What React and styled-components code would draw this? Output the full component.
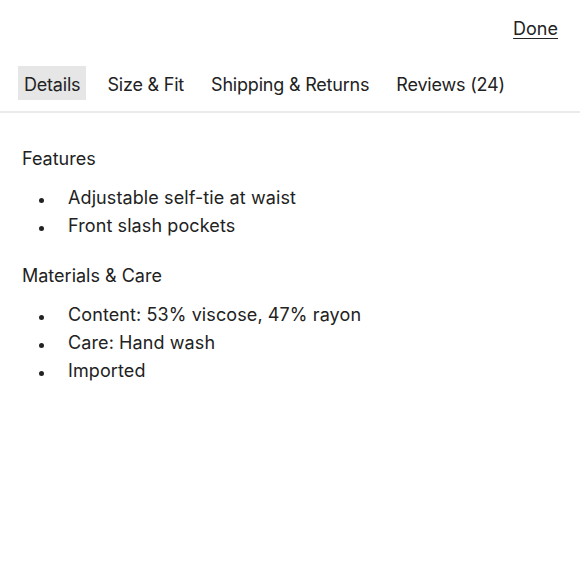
import React from "react";
import styled, { createGlobalStyle } from "styled-components";

const Global = createGlobalStyle`
  html, body { margin: 0; padding: 0; background: #fff; }
  body { font-family: Inter, "Noto Sans", sans-serif; color: #222; }
`;

const Page = styled.div`
  width: 580px;
  display: flex;
  flex-direction: column;
`;

const TopBar = styled.div`
  display: flex;
  justify-content: flex-end;
  padding: 17px 22px 0 0;
  height: 51px;
  box-sizing: border-box;
`;

const DoneLink = styled.a`
  font-size: 18px;
  color: #222;
  text-decoration: underline;
  text-decoration-thickness: 1px;
  text-underline-offset: 3px;
  line-height: 24px;
  cursor: pointer;
`;

const Tabs = styled.div`
  display: flex;
  gap: 15px;
  padding: 15px 18px 11px;
  border-bottom: 2px solid #ebebeb;
`;

const Tab = styled.button`
  border: none;
  font: inherit;
  font-size: 18px;
  letter-spacing: -0.2px;
  color: #222;
  height: 34px;
  padding: 2px 6px 0;
  background: ${(p) => (p.$active ? "#e6e6e6" : "transparent")};
  cursor: pointer;
`;

const Content = styled.div`
  padding: 32px 22px 0;
  display: flex;
  flex-direction: column;
`;

const Heading = styled.h3`
  margin: 0;
  font-size: 18px;
  font-weight: 400;
  line-height: 28px;
`;

const List = styled.ul`
  margin: 11px 0 22px;
  padding: 0 0 0 46px;
  list-style: none;
`;

const Item = styled.li`
  position: relative;
  font-size: 18px;
  letter-spacing: 0.1px;
  line-height: 28px;
  &::before {
    content: "";
    position: absolute;
    left: -29px;
    top: 14px;
    width: 5px;
    height: 5px;
    border-radius: 50%;
    background: #222;
  }
`;

const sections = [
  { title: "Features", items: ["Adjustable self-tie at waist", "Front slash pockets"] },
  {
    title: "Materials & Care",
    items: ["Content: 53% viscose, 47% rayon", "Care: Hand wash", "Imported"],
  },
];

export default function App() {
  return (
    <Page>
      <Global />
      <TopBar>
        <DoneLink>Done</DoneLink>
      </TopBar>
      <Tabs>
        <Tab $active>Details</Tab>
        <Tab>Size &amp; Fit</Tab>
        <Tab>Shipping &amp; Returns</Tab>
        <Tab>Reviews (24)</Tab>
      </Tabs>
      <Content>
        {sections.map((s) => (
          <React.Fragment key={s.title}>
            <Heading>{s.title}</Heading>
            <List>
              {s.items.map((i) => (
                <Item key={i}>{i}</Item>
              ))}
            </List>
          </React.Fragment>
        ))}
      </Content>
    </Page>
  );
}
